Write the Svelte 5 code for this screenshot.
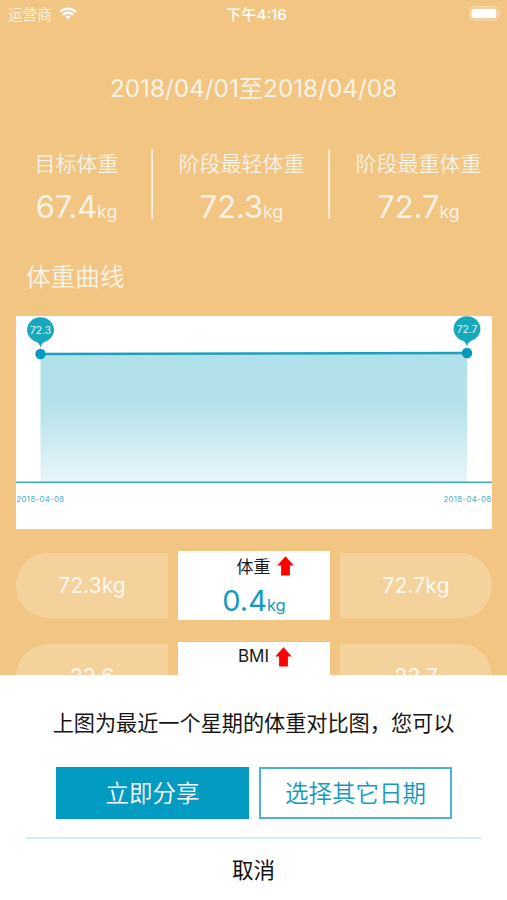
<script lang="ts">
	interface Stat {
		label: string;
		value: string;
	}

	interface Row {
		name: string;
		before: string;
		after: string;
		diff?: string;
		unit?: string;
	}

	const stats: Stat[] = [
		{ label: '目标体重', value: '67.4' },
		{ label: '阶段最轻体重', value: '72.3' },
		{ label: '阶段最重体重', value: '72.7' }
	];

	const rows: Row[] = [
		{ name: '体重', before: '72.3kg', after: '72.7kg', diff: '0.4', unit: 'kg' },
		{ name: 'BMI', before: '23.6', after: '23.7' }
	];

	// chart geometry
	const baseline = 166;
	const points = [
		{ x: 24.5, y: 38, label: '72.3' },
		{ x: 451, y: 37, label: '72.7' }
	];
	const line = points.map((p) => `${p.x},${p.y}`).join(' ');
	const area = `${points[0].x},${baseline} ${line} ${points[1].x},${baseline}`;
</script>

<div class="screen">
	<header class="status">
		<div class="carrier">
			<span>运营商</span>
			<svg width="18" height="13" viewBox="0 0 18 13" aria-hidden="true">
				<path d="M1.2 4.9 A11 11 0 0 1 16.8 4.9" />
				<path d="M4 7.9 A7 7 0 0 1 14 7.9" />
				<path class="dot" d="M9 12.6 L6.2 9.9 A4 4 0 0 1 11.8 9.9 Z" />
			</svg>
		</div>
		<div class="time">下午4:16</div>
		<svg class="battery" width="33" height="15" viewBox="0 0 33 15" aria-hidden="true">
			<rect x="0.8" y="0.8" width="28.6" height="13.4" rx="4" class="shell" />
			<rect x="2.4" y="2.8" width="25" height="9.4" rx="2.2" fill="#fff" />
			<path d="M30.8 5.3 Q32.8 7.5 30.8 9.7 Z" fill="#fff" opacity="0.45" />
		</svg>
	</header>

	<h1 class="range">2018/04/01至2018/04/08</h1>

	<section class="stats">
		{#each stats as s (s.label)}
			<div class="stat">
				<div class="stat-label">{s.label}</div>
				<div class="stat-value">{s.value}<small>kg</small></div>
			</div>
		{/each}
	</section>

	<h2 class="title">体重曲线</h2>

	<svg class="chart" width="476" height="213" viewBox="0 0 476 213">
		<defs>
			<linearGradient id="fade" x1="0" y1="0" x2="0" y2="1">
				<stop offset="0" stop-color="#b0e0e8" />
				<stop offset="0.38" stop-color="#b3e1e9" />
				<stop offset="1" stop-color="#e8f5fa" />
			</linearGradient>
		</defs>
		<polygon points={area} fill="url(#fade)" />
		<polyline points={line} class="curve" />
		<line x1="0" x2="476" y1={baseline + 0.3} y2={baseline + 0.3} class="axis" />
		{#each points as p (p.x)}
			<g transform="translate({p.x} {p.y})">
				<path d="M0 -6 C-0.9 -9.5 -1.8 -11.2 -5 -12.4 A13.4 12.6 0 1 1 5 -12.4 C1.8 -11.2 0.9 -9.5 0 -6 Z" class="pin" />
				<circle r="5.2" fill="#049abf" />
				<text y="-20.2" class="pin-text">{p.label}</text>
			</g>
		{/each}
		<text x="0.5" y="186" class="tick">2018-04-08</text>
		<text x="475.5" y="186" class="tick end">2018-04-08</text>
	</svg>

	<section class="compare">
		{#each rows as r (r.name)}
			<div class="row">
				<div class="side left">{r.before}</div>
				<div class="mid">
					<div class="mid-name">
						<span>{r.name}</span>
						<svg width="17" height="20" viewBox="0 0 17 20" aria-hidden="true">
							<path d="M8.5 0.3 L16.8 9.6 H12.9 V19.6 H4.1 V9.6 H0.2 Z" fill="#f00" />
						</svg>
					</div>
					{#if r.diff}
						<div class="mid-diff">{r.diff}<small>{r.unit}</small></div>
					{/if}
				</div>
				<div class="side right">{r.after}</div>
			</div>
		{/each}
	</section>

	<section class="sheet">
		<p class="message">上图为最近一个星期的体重对比图，您可以</p>
		<div class="actions">
			<button class="primary">立即分享</button>
			<button class="outline">选择其它日期</button>
		</div>
		<button class="cancel">取消</button>
	</section>
</div>

<style>
	:global(body) {
		margin: 0;
	}

	.screen {
		width: 507px;
		height: 900px;
		overflow: hidden;
		display: flex;
		flex-direction: column;
		background: #f2c583;
		color: #f8f3e7;
		font-family: Inter, 'Noto Sans CJK SC', sans-serif;
	}

	.status {
		display: grid;
		grid-template-columns: 1fr auto 1fr;
		align-items: center;
		height: 26px;
		padding: 0 7px 0 8px;
		flex-shrink: 0;
		color: #fff;
		font-size: 14.6px;
	}
	.carrier {
		display: flex;
		align-items: center;
		gap: 7px;
		color: #fdf1de;
	}
	.carrier path {
		fill: none;
		stroke: #fff;
		stroke-width: 2.5;
	}
	.carrier .dot {
		fill: #fff;
		stroke: none;
	}
	.time {
		padding-left: 5px;
		font-size: 15.2px;
		font-weight: 500;
	}
	.battery {
		justify-self: end;
		margin-right: -2px;
	}
	.shell {
		fill: none;
		stroke: #fff;
		stroke-opacity: 0.35;
		stroke-width: 1.2;
	}

	.range {
		margin: 44px 0 0;
		height: 36px;
		line-height: 36px;
		flex-shrink: 0;
		text-align: center;
		font-size: 24.3px;
		font-weight: 400;
	}

	.stats {
		display: grid;
		grid-template-columns: 153px 177px 177px;
		height: 70px;
		margin-top: 43px;
		flex-shrink: 0;
		text-align: center;
	}
	.stat + .stat {
		box-shadow: -2px 0 0 -0.2px #faf3e5;
	}
	.stat-label {
		height: 30px;
		line-height: 30px;
		font-size: 21px;
		font-weight: 350;
	}
	.stat-value {
		height: 40px;
		line-height: 56px;
		font-size: 30.8px;
		font-weight: 400;
	}
	.stat-value small {
		font-size: 17.8px;
	}

	.title {
		margin: 40px 0 0 26px;
		height: 36px;
		line-height: 36px;
		flex-shrink: 0;
		font-size: 24.6px;
		font-weight: 350;
	}

	.chart {
		display: block;
		margin: 21.4px 0 0 16px;
		flex-shrink: 0;
		background: #fff;
	}
	.curve {
		fill: none;
		stroke: #1f9fc0;
		stroke-width: 2.6;
	}
	.axis {
		stroke: #3cabc9;
		stroke-width: 1.6;
	}
	.pin {
		fill: #17a9bb;
	}
	.pin-text {
		fill: #e6f7f9;
		font-size: 10.3px;
		text-anchor: middle;
	}
	.tick {
		fill: #3fb0cb;
		font-size: 7.8px;
		letter-spacing: 0.35px;
	}
	.end {
		text-anchor: end;
	}

	.compare {
		display: flex;
		flex-direction: column;
		gap: 22px;
		height: 124px;
		margin-top: 21.6px;
		flex-shrink: 0;
		overflow: hidden;
	}
	.row {
		display: grid;
		grid-template-columns: 152px 152px 152px;
		gap: 10px;
		align-items: center;
		height: 69px;
		padding: 0 16px;
		flex-shrink: 0;
	}
	.side {
		height: 65px;
		line-height: 65px;
		text-align: center;
		background: #f5d19c;
		color: #fffaf0;
		font-size: 21.2px;
		font-weight: 400;
	}
	.left {
		border-radius: 32px 0 0 32px;
	}
	.right {
		border-radius: 0 32px 32px 0;
	}
	.mid {
		height: 69px;
		background: #fff;
	}
	.mid-name {
		display: flex;
		justify-content: center;
		align-items: center;
		gap: 6px;
		height: 30px;
		padding-left: 22px;
		color: #1a1a1a;
		font-size: 17px;
	}
	.mid-name span {
		margin-top: -1px;
	}
	.mid-diff {
		height: 39px;
		line-height: 39px;
		text-align: center;
		color: #129bbd;
		font-size: 29px;
		font-weight: 400;
	}
	.mid-diff small {
		font-size: 16.5px;
	}

	.sheet {
		flex: 1;
		display: flex;
		flex-direction: column;
		padding: 0 26px;
		background: #fff;
	}
	.message {
		margin: 33px 0 0;
		height: 32px;
		line-height: 32px;
		text-align: center;
		white-space: nowrap;
		color: #151515;
		font-size: 21.15px;
	}
	.actions {
		display: flex;
		gap: 10px;
		padding: 27px 30px 18px;
		border-bottom: 2px solid #d3ecee;
	}
	button {
		margin: 0;
		padding: 0;
		border: 0;
		background: none;
		font-family: inherit;
	}
	.actions button {
		width: 193px;
		height: 52px;
		padding-bottom: 1px;
		flex-shrink: 0;
		border: 2px solid #049bc2;
		font-size: 23.5px;
		font-weight: 350;
	}
	.actions .primary {
		background: #049bc2;
		color: #fff;
	}
	.actions .outline {
		border-color: #4ab3cf;
		color: #129bc0;
	}
	.cancel {
		height: 59px;
		color: #111;
		font-size: 21.5px;
	}
</style>
